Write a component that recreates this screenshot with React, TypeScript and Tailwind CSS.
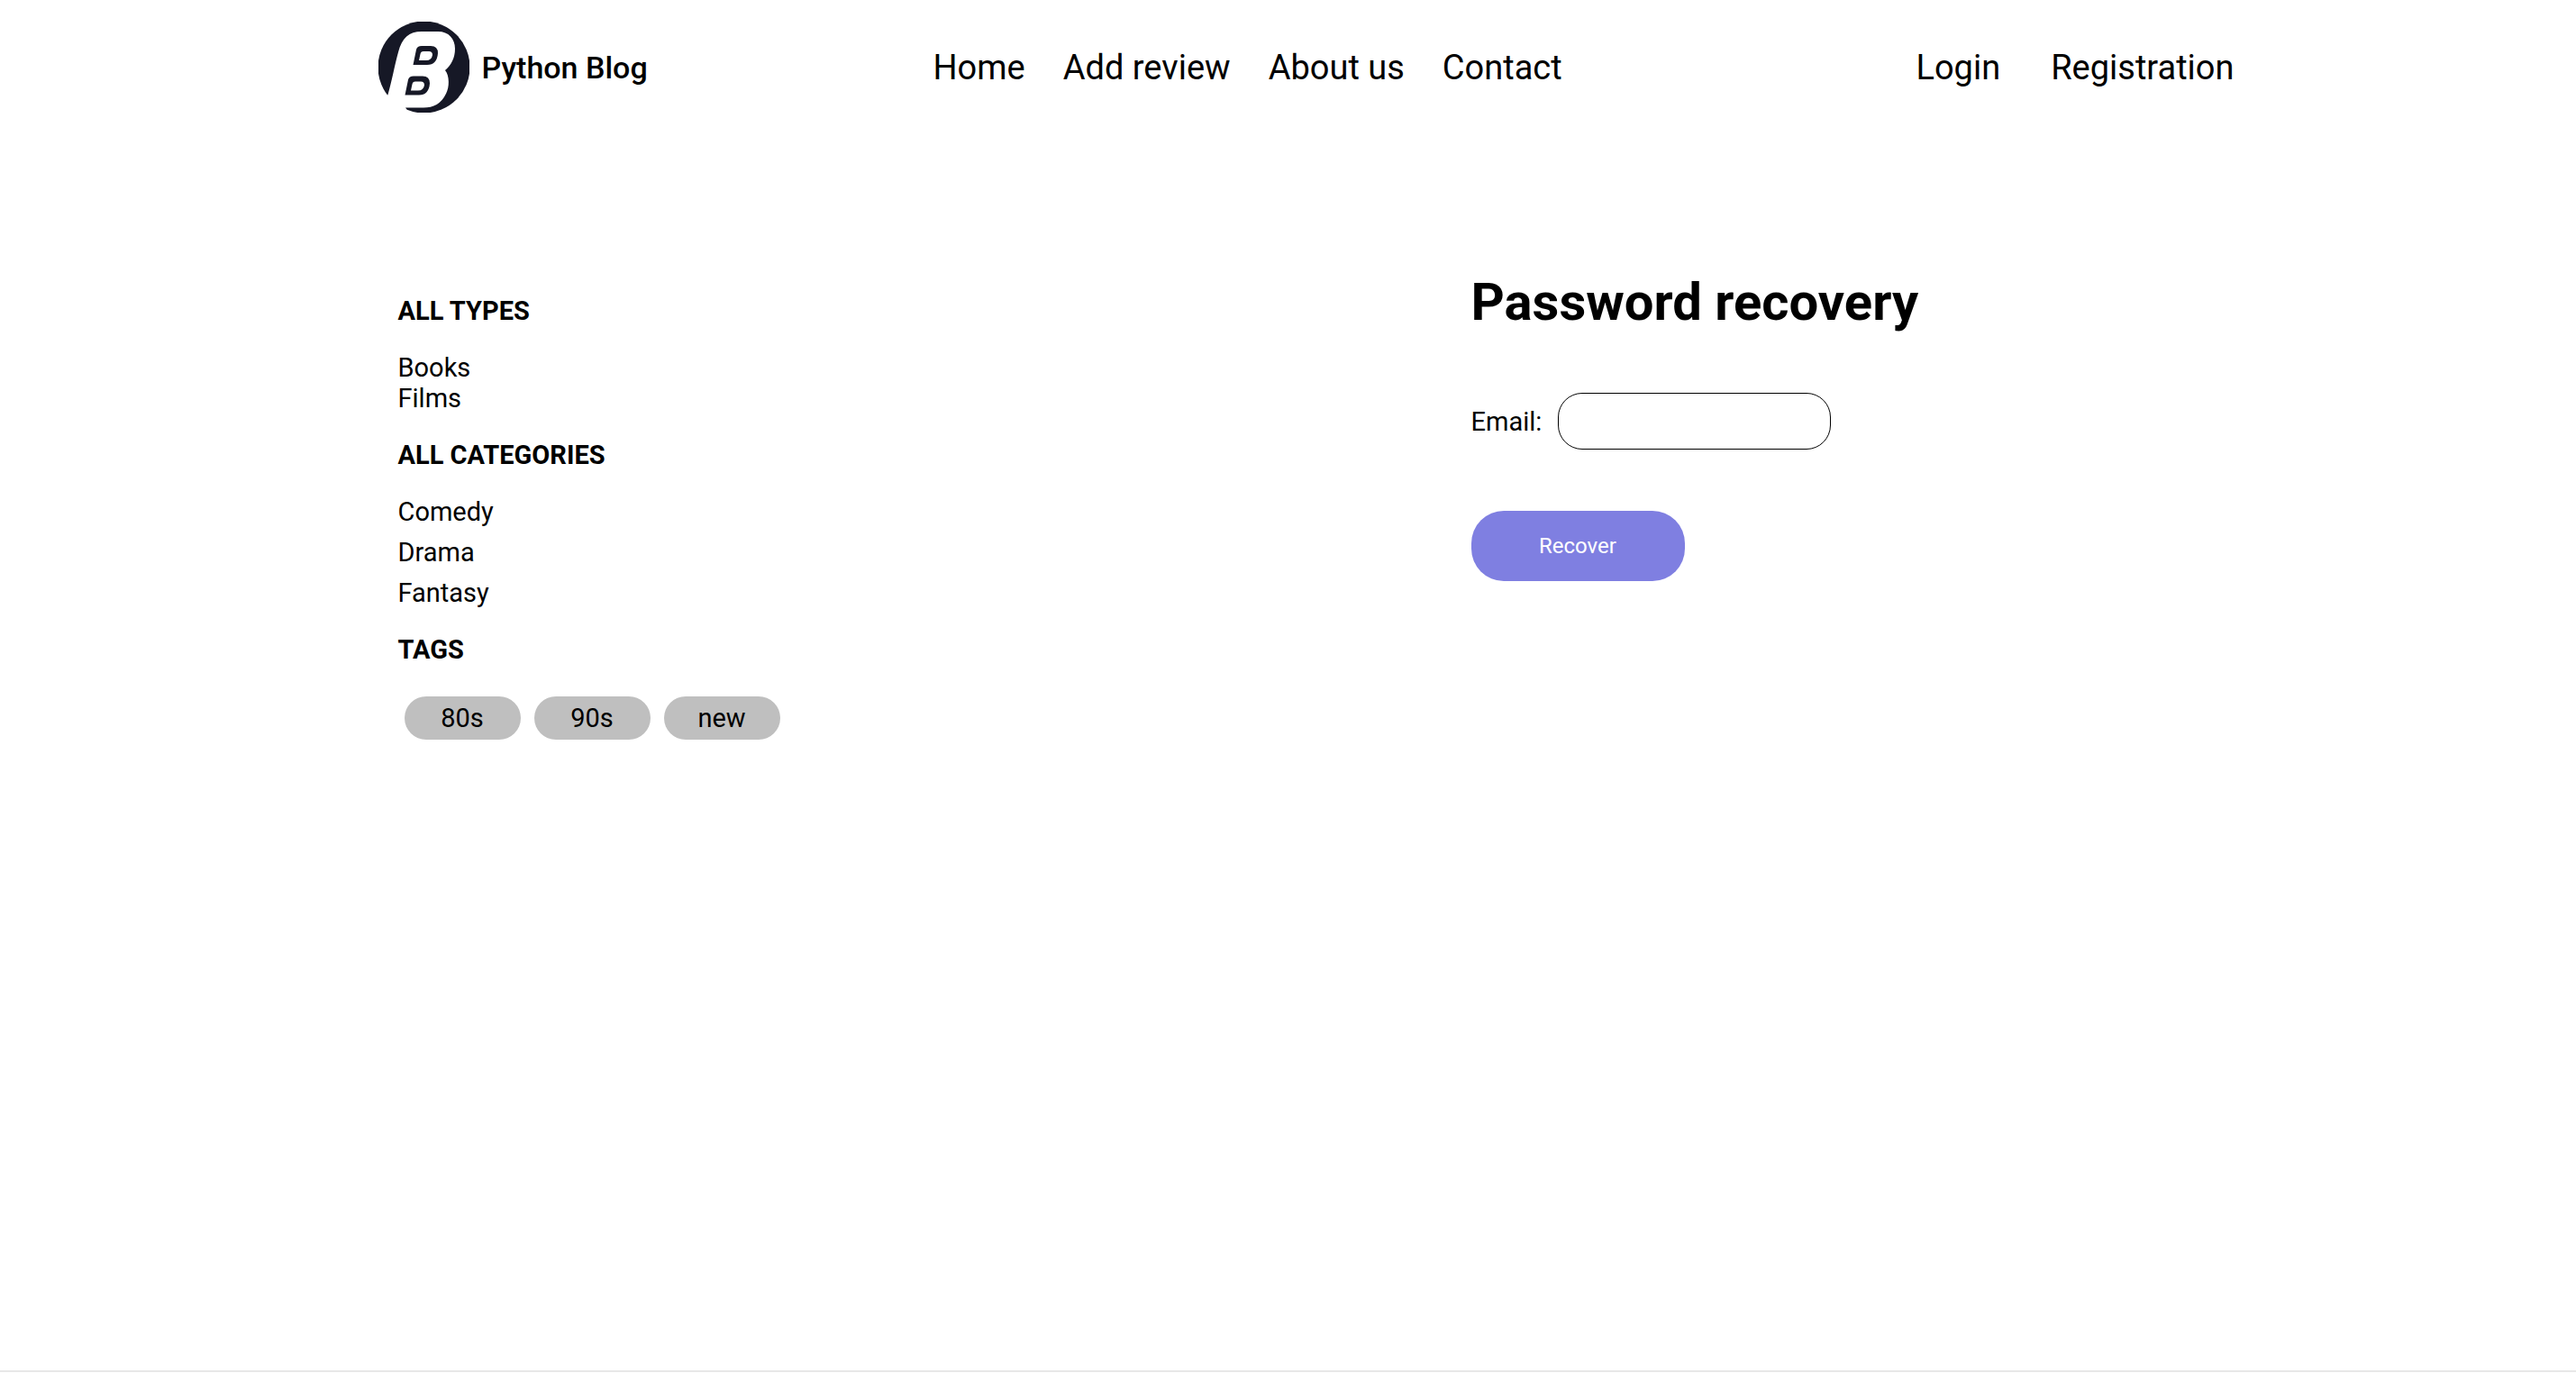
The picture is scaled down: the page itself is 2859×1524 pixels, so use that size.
import React from "react";

const navLinks = ["Home", "Add review", "About us", "Contact"];
const authLinks = ["Login", "Registration"];
const types = ["Books", "Films"];
const categories = ["Comedy", "Drama", "Fantasy"];
const tags = ["80s", "90s", "new"];

function Logo() {
  return (
    <svg viewBox="0 0 101 101" className="size-[101px] shrink-0" aria-hidden="true">
      <circle cx="50.5" cy="50.5" r="51" fill="#161826" />
      <path
        d="M0 101 L10.5 81 C15 66 18 48 22 34 C26 18 34 11 48 11 H66 C78 11 85 19 85 30 C85 40 81 48 74 54 C79 60 79 73 75 80 C70 91 61 95.5 50 95.5 H30 L34 101 Z"
        fill="#fff"
      />
      <path
        fillRule="evenodd"
        fill="#161826"
        d="M38.5 48 L42 31 Q43 27 48 27 H58 Q66 27 66 35 Q65 48 54 48 Z M45 43 H53 Q59 43 60 37 Q60 33 56 33 H50 Q47 33 46.5 36 Z"
      />
      <path
        fillRule="evenodd"
        fill="#161826"
        d="M29.5 81.5 L33 64.5 Q34 60.5 39 60.5 H49 Q57 60.5 57 68.5 Q56 81.5 45 81.5 Z M36 76.5 H44 Q50 76.5 51 70.5 Q51 66.5 47 66.5 H41 Q38 66.5 37.5 69.5 Z"
      />
    </svg>
  );
}

function SideHeading({ children }: { children: React.ReactNode }) {
  return <h2 className="font-bold uppercase">{children}</h2>;
}

export default function App() {
  return (
    <div className="flex min-h-screen flex-col bg-white font-['Roboto',sans-serif] text-[29px] leading-[34px] text-black">
      <div className="mx-auto w-full max-w-[2100px] flex-1 pl-10">
        <header className="flex items-center pt-6 text-[38px] leading-[44px]">
          <div className="flex w-[616px] shrink-0">
            <a href="#" className="flex items-center gap-3.5 text-[34px] font-medium">
              <Logo />
              Python Blog
            </a>
          </div>
          <nav className="flex flex-1 gap-[42px]">
            {navLinks.map((label) => (
              <a key={label} href="#">
                {label}
              </a>
            ))}
          </nav>
          <div className="flex gap-14">
            {authLinks.map((label) => (
              <a key={label} href="#">
                {label}
              </a>
            ))}
          </div>
        </header>

        <div className="flex pl-[22px] pt-44">
          <aside className="flex w-[1191px] shrink-0 flex-col gap-[29px] pt-[27px]">
            <SideHeading>All types</SideHeading>
            <ul>
              {types.map((label) => (
                <li key={label}>
                  <a href="#">{label}</a>
                </li>
              ))}
            </ul>
            <SideHeading>All categories</SideHeading>
            <ul className="flex flex-col gap-[11px]">
              {categories.map((label) => (
                <li key={label}>
                  <a href="#">{label}</a>
                </li>
              ))}
            </ul>
            <SideHeading>Tags</SideHeading>
            <ul className="flex gap-[15px] px-[7px] pt-1.5">
              {tags.map((label) => (
                <li key={label}>
                  <a href="#" className="flex h-12 w-[129px] items-center justify-center rounded-full bg-[#bfbfbf]">
                    {label}
                  </a>
                </li>
              ))}
            </ul>
          </aside>

          <main>
            <h1 className="text-[58px] leading-[68px] font-bold">Password recovery</h1>
            <form className="mt-[67px]" onSubmit={(e) => e.preventDefault()}>
              <div className="flex items-center gap-[18px]">
                <label htmlFor="email">Email:</label>
                <input
                  id="email"
                  type="email"
                  className="h-[63px] w-[303px] rounded-[27px] border border-black bg-white px-4 outline-none"
                />
              </div>
              <button
                type="submit"
                className="mt-[68px] h-[78px] w-[237px] rounded-[36px] bg-[#7f7fe1] text-[24px] text-white"
              >
                Recover
              </button>
            </form>
          </main>
        </div>
      </div>
      <footer className="h-[3px] border-t-2 border-[#e7e7e7]" />
    </div>
  );
}
